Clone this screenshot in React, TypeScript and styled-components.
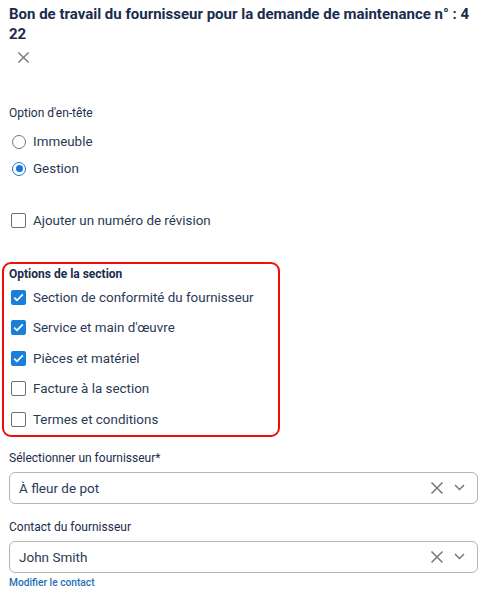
import React from "react";
import styled, { createGlobalStyle } from "styled-components";

const Global = createGlobalStyle`
  html, body { margin: 0; padding: 0; background: #fff; }
  body { font-family: Roboto, "Liberation Sans", Arial, sans-serif; color: #22324f; }
  * { box-sizing: border-box; }
`;

const Page = styled.div`
  width: 500px;
  padding: 4px 22px 0 9px;
  display: flex;
  flex-direction: column;
`;

const Title = styled.h1`
  margin: 0 6px 0 0;
  font-size: 15px;
  line-height: 20px;
  font-weight: 700;
  color: #1b2c4c;
  word-break: break-all;
`;

const CloseBtn = styled.button`
  border: 0;
  background: none;
  padding: 0;
  margin: 5px 0 0 6px;
  width: 16px;
  height: 16px;
  display: flex;
  align-items: center;
  justify-content: center;
  color: #777;
`;

const Group = styled.div<{ $mt: number }>`
  margin-top: ${(p) => p.$mt}px;
  display: flex;
  flex-direction: column;
`;

const GroupLabel = styled.div<{ $bold?: boolean }>`
  font-size: 12px;
  line-height: 16px;
  font-weight: ${(p) => (p.$bold ? 700 : 400)};
  color: #1b2c4c;
`;

const OptionRow = styled.label<{ $h: number }>`
  display: flex;
  align-items: center;
  height: ${(p) => p.$h}px;
  gap: 7px;
  font-size: 13.4px;
  color: #2a3a56;
  padding-left: 2px;
`;

const RadioCircle = styled.span<{ $on: boolean }>`
  width: 14px;
  height: 14px;
  border-radius: 50%;
  border: 1.5px solid ${(p) => (p.$on ? "#1976d2" : "#757575")};
  display: flex;
  align-items: center;
  justify-content: center;
  flex: none;
  margin-left: 1px;
  &::after {
    content: "";
    width: 7px;
    height: 7px;
    border-radius: 50%;
    background: ${(p) => (p.$on ? "#1976d2" : "transparent")};
  }
`;

const Box = styled.span<{ $on: boolean }>`
  width: 15px;
  height: 15px;
  border-radius: 2px;
  flex: none;
  border: ${(p) => (p.$on ? "none" : "1.5px solid #6f6f6f")};
  background: ${(p) => (p.$on ? "#1a7fd6" : "#fff")};
  display: flex;
  align-items: center;
  justify-content: center;
`;

const Highlight = styled.div`
  margin: 28px 198px 0 -7px;
  border: 2px solid #f20d0d;
  border-radius: 9px;
  padding: 2px 0 0 5px;
  display: flex;
  flex-direction: column;
`;

const FieldLabel = styled.div`
  font-size: 12px;
  line-height: 16px;
  color: #1b2c4c;
  margin-bottom: 6px;
`;

const Select = styled.div`
  height: 32px;
  border: 1px solid #b5b5b5;
  border-radius: 6px;
  display: flex;
  align-items: center;
  padding: 0 12px 0 9px;
  font-size: 13.5px;
  color: #2a3a56;
`;

const SelectValue = styled.span`
  flex: 1;
`;

const Icons = styled.div`
  display: flex;
  align-items: center;
  gap: 10px;
  color: #777;
`;

const Link = styled.a`
  font-size: 10.2px;
  line-height: 12px;
  font-weight: 500;
  color: #1f6fb5;
  margin-top: 4px;
  text-decoration: none;
`;

const Check = () => (
  <svg width="11" height="9" viewBox="0 0 11 9">
    <path d="M1.2 4.6 L4 7.3 L9.8 1.4" fill="none" stroke="#fff" strokeWidth="1.8" />
  </svg>
);

const XIcon = ({ size = 14 }: { size?: number }) => (
  <svg width={size} height={size} viewBox="0 0 14 14">
    <path d="M1.5 1.5 L12.5 12.5 M12.5 1.5 L1.5 12.5" stroke="currentColor" strokeWidth="1.5" fill="none" />
  </svg>
);

const Chevron = () => (
  <svg width="11" height="7" viewBox="0 0 11 7">
    <path d="M1 1 L5.5 5.5 L10 1" stroke="currentColor" strokeWidth="1.5" fill="none" />
  </svg>
);

const CheckItem = ({ on, label, h }: { on: boolean; label: string; h: number }) => (
  <OptionRow $h={h}>
    <Box $on={on}>{on && <Check />}</Box>
    {label}
  </OptionRow>
);

const SelectField = ({ label, value, mt }: { label: string; value: string; mt: number }) => (
  <Group $mt={mt}>
    <FieldLabel>{label}</FieldLabel>
    <Select>
      <SelectValue>{value}</SelectValue>
      <Icons>
        <XIcon size={14} />
        <Chevron />
      </Icons>
    </Select>
  </Group>
);

export default function App() {
  return (
    <>
      <Global />
      <Page>
        <Title>Bon de travail du fournisseur pour la demande de maintenance n° : 422</Title>
        <CloseBtn aria-label="Fermer">
          <XIcon size={13} />
        </CloseBtn>
        <Group $mt={40}>
          <GroupLabel>Option d'en-tête</GroupLabel>
          <Group $mt={7}>
            <OptionRow $h={27}>
              <RadioCircle $on={false} />
              Immeuble
            </OptionRow>
            <OptionRow $h={27}>
              <RadioCircle $on={true} />
              Gestion
            </OptionRow>
          </Group>
        </Group>
        <Group $mt={25}>
          <CheckItem on={false} label="Ajouter un numéro de révision" h={27} />
        </Group>
        <Highlight>
          <GroupLabel $bold>Options de la section</GroupLabel>
          <CheckItem on={true} label="Section de conformité du fournisseur" h={30.5} />
          <CheckItem on={true} label="Service et main d'œuvre" h={30.5} />
          <CheckItem on={true} label="Pièces et matériel" h={30.5} />
          <CheckItem on={false} label="Facture à la section" h={30.5} />
          <CheckItem on={false} label="Termes et conditions" h={30.5} />
        </Highlight>
        <SelectField label="Sélectionner un fournisseur*" value="À fleur de pot" mt={13} />
        <SelectField label="Contact du fournisseur" value="John Smith" mt={15} />
        <Link href="#">Modifier le contact</Link>
      </Page>
    </>
  );
}
